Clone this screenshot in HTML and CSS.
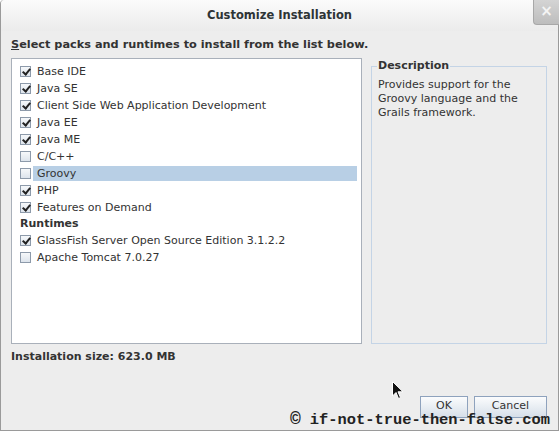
FILE: index.html
```html
<!DOCTYPE html>
<html lang="en">
<head>
    <meta charset="UTF-8">
    <title>Customize Installation</title>
    <link rel="stylesheet" href="styles.css">
</head>
<body>
<div class="window">
    <div class="titlebar">
        <span class="title">Customize Installation</span>
        <div class="close">&#215;</div>
    </div>
    <div class="content">
        <div class="intro"><u>S</u>elect packs and runtimes to install from the list below.</div>
        <div class="main">
            <div class="list">
                <div class="row"><span class="check on"></span><span class="label">Base IDE</span></div>
                <div class="row"><span class="check on"></span><span class="label">Java SE</span></div>
                <div class="row"><span class="check on"></span><span class="label">Client Side Web Application Development</span></div>
                <div class="row"><span class="check on"></span><span class="label">Java EE</span></div>
                <div class="row"><span class="check on"></span><span class="label">Java ME</span></div>
                <div class="row"><span class="check"></span><span class="label">C/C++</span></div>
                <div class="row selected"><span class="check"></span><span class="label">Groovy</span></div>
                <div class="row"><span class="check on"></span><span class="label">PHP</span></div>
                <div class="row"><span class="check on"></span><span class="label">Features on Demand</span></div>
                <div class="group">Runtimes</div>
                <div class="row"><span class="check on"></span><span class="label">GlassFish Server Open Source Edition 3.1.2.2</span></div>
                <div class="row"><span class="check"></span><span class="label">Apache Tomcat 7.0.27</span></div>
            </div>
            <fieldset class="desc">
                <legend>Description</legend>
                <p>Provides support for the Groovy language and the Grails framework.</p>
            </fieldset>
        </div>
        <div class="size">Installation size: 623.0 MB</div>
        <div class="buttons">
            <button class="btn ok">OK</button>
            <button class="btn cancel">Cancel</button>
        </div>
    </div>
    <div class="watermark"><span class="copy">&copy;</span><span>if-not-true-then-false.com</span></div>
    <svg class="cursor" width="12" height="19" viewBox="0 0 12 19">
        <path d="M0.5 0.5 L0.5 15 L4 11.5 L6.5 17.5 L8.5 16.6 L6 10.8 L11 10.8 Z" fill="#111" stroke="#fff" stroke-width="1"/>
    </svg>
</div>
</body>
</html>
```

FILE: styles.css
```css
* {
    margin: 0;
    padding: 0;
    box-sizing: border-box;
}

body {
    width: 559px;
    height: 431px;
    overflow: hidden;
    font-family: "DejaVu Sans", sans-serif;
    font-size: 11px;
    color: #333;
}

.window {
    position: relative;
    width: 559px;
    height: 431px;
    background: #ededed;
    border: 1px solid #9a9a9a;
    border-top: none;
    border-radius: 4px 4px 0 0;
}

.titlebar {
    height: 31px;
    display: flex;
    align-items: center;
    justify-content: center;
    background: linear-gradient(#fbfbfb, #ebebeb);
    border-radius: 4px 4px 0 0;
    position: relative;
}

.title {
    font-weight: bold;
    font-size: 11.5px;
    color: #2e3436;
    margin-top: -1px;
}

.close {
    position: absolute;
    right: -1px;
    top: 0;
    width: 26px;
    height: 25px;
    background: linear-gradient(#d4d4d4, #bdbdbd);
    border-left: 1px solid #a8a8a8;
    border-bottom: 1px solid #a8a8a8;
    border-radius: 0 0 0 4px;
    color: #f4f4f4;
    font-weight: bold;
    font-size: 15px;
    text-align: center;
    line-height: 22px;
}

.content {
    padding: 6px 10px 0 10px;
}

.intro {
    font-weight: bold;
    font-size: 11.3px;
    height: 21px;
    padding-top: 1px;
}

.main {
    display: flex;
    gap: 9px;
}

.list {
    width: 351px;
    height: 286px;
    background: #fff;
    border: 1px solid #a9b0ba;
    padding: 4px 4px 0 8px;
}

.row {
    display: flex;
    align-items: center;
    height: 17px;
}

.check {
    width: 11px;
    height: 11px;
    border: 1px solid #8d9aaa;
    background: linear-gradient(#f6f8fa, #dde4ec);
    position: relative;
    flex: none;
}

.check.on::after {
    content: "";
    position: absolute;
    left: 3px;
    top: 0;
    width: 3px;
    height: 6px;
    border-right: 2px solid #222;
    border-bottom: 2px solid #222;
    transform: rotate(40deg);
}

.label {
    flex: 1;
    height: 15px;
    line-height: 15px;
    padding-left: 4px;
    margin-left: 2px;
}

.selected .label {
    background: #b8cfe5;
}

.group {
    font-weight: bold;
    height: 16px;
    line-height: 16px;
}

.desc {
    width: 176px;
    height: 285px;
    margin-top: 1px;
    border: 1px solid #c4d4e6;
    padding: 0 6px;
}

.desc legend {
    font-weight: bold;
    padding: 0 1px;
    margin-left: -1px;
    line-height: 14px;
}

.desc p {
    line-height: 14px;
    margin-top: 5px;
}

.size {
    font-weight: bold;
    margin-top: 6px;
}

.buttons {
    display: flex;
    justify-content: flex-end;
    gap: 6px;
    margin-top: 33px;
    padding-right: 1px;
}

.btn {
    font-family: "DejaVu Sans", sans-serif;
    font-size: 11px;
    color: #333;
    height: 22px;
    padding-bottom: 3px;
    border: 1px solid #8ea2bd;
    background: linear-gradient(#fbfcfd, #d6dfe9);
}

.ok {
    width: 48px;
}

.cancel {
    width: 73px;
}

.watermark {
    position: absolute;
    left: 289px;
    top: 409px;
    display: flex;
    align-items: baseline;
    gap: 9px;
    font-family: "Liberation Mono", monospace;
    font-weight: bold;
    font-size: 15.4px;
    color: #222;
}

.copy {
    font-size: 18px;
}

.cursor {
    position: absolute;
    left: 391px;
    top: 381px;
}
```
